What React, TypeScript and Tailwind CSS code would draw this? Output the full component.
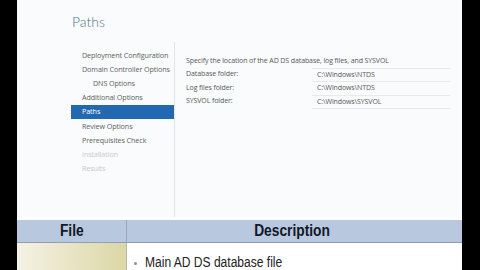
const NAV = [
  { label: "Deployment Configuration" },
  { label: "Domain Controller Options" },
  { label: "DNS Options", indent: true },
  { label: "Additional Options" },
  { label: "Paths", active: true },
  { label: "Review Options" },
  { label: "Prerequisites Check" },
  { label: "Installation", disabled: true },
  { label: "Results", disabled: true },
]

const FOLDERS = [
  { label: "Database folder:", value: "C:\\Windows\\NTDS" },
  { label: "Log files folder:", value: "C:\\Windows\\NTDS" },
  { label: "SYSVOL folder:", value: "C:\\Windows\\SYSVOL" },
]

function WizardShot() {
  return (
    <div className="h-[219px] bg-[#fafbfc] flex flex-col font-['Open_Sans',sans-serif]">
      <div className="h-[42px] pl-[55px] pt-[13px]">
        <h1 className="font-['Lato',sans-serif] font-light text-[14px] leading-[18px] text-[#4f7587]">Paths</h1>
      </div>
      <div className="flex flex-1">
        <div className="w-[158px] pl-[54px] pt-[6px] border-r border-[#e3e4e6]">
          {NAV.map((item) => (
            <div
              key={item.label}
              className={
                "h-[14.2px] flex items-center text-[7.2px] tracking-[-0.1px] " +
                (item.active ? "bg-[#2369b1] text-white " : item.disabled ? "text-[#c8cacd] " : "text-[#5d5f62] ") +
                (item.indent ? "pl-[22px]" : "pl-[11px]")
              }
            >
              {item.label}
            </div>
          ))}
        </div>
        <div className="flex-1 pl-[11px] pt-[13px] text-[7px] text-[#55585b] tracking-[-0.1px]">
          <div className="h-[13px] flex items-center">Specify the location of the AD DS database, log files, and SYSVOL</div>
          {FOLDERS.map((f) => (
            <div key={f.label} className="h-[13.4px] flex items-center">
              <span className="w-[126px]">{f.label}</span>
              <span className="w-[138px] h-full flex items-center pl-[5px] border-t border-[#e8e9eb]">{f.value}</span>
            </div>
          ))}
          <div className="ml-[126px] w-[138px] border-t border-[#e8e9eb]" />
        </div>
      </div>
    </div>
  )
}

export default function App() {
  return (
    <div className="w-[480px] h-[270px] bg-black overflow-hidden flex">
      <div className="ml-[17px] w-[445px] h-full bg-white flex flex-col">
        <WizardShot />
        <div className="h-[3px] bg-white" />
        <div className="h-[23px] flex bg-[#b8c9df] border-b border-[#8e9eb4] font-['Liberation_Sans',Arial,sans-serif] font-bold text-[#111827] text-[16px]">
          <div className="w-[110px] flex items-center justify-center border-r border-[#9aa6b6]">
            <span className="inline-block scale-x-[0.86]">File</span>
          </div>
          <div className="flex-1 flex items-center justify-center pr-[4px]">
            <span className="inline-block scale-x-[0.86]">Description</span>
          </div>
        </div>
        <div className="flex-1 flex font-['Liberation_Sans',Arial,sans-serif]">
          <div className="w-[110px] border-r border-[#b7b9a8] bg-gradient-to-r from-[#f4f2e4] to-[#dcd7a6]" />
          <div className="flex-1 flex items-start pl-[7px] pt-[11px] text-[#222] text-[14px] leading-[16px]">
            <span className="w-[3px] h-[3px] rounded-full bg-[#8a9098] mt-[8px] mr-[8px]" />
            <span className="inline-block origin-left scale-x-[0.86] whitespace-nowrap">Main AD DS database file</span>
          </div>
        </div>
      </div>
    </div>
  )
}
